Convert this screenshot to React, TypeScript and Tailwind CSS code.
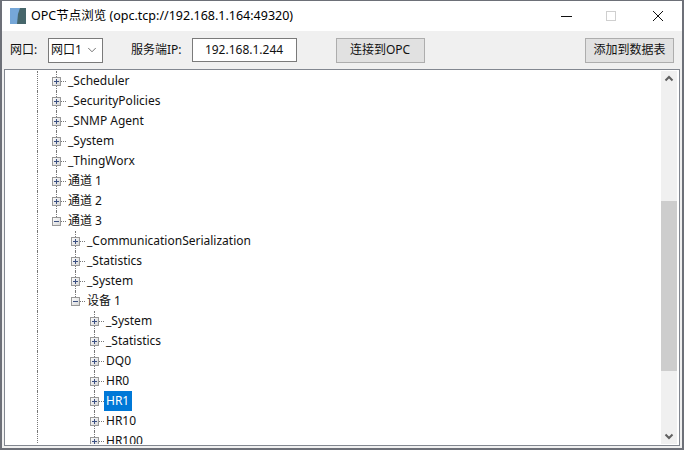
import { ChevronDown } from "lucide-react";

type Node = { label: string; level: 1 | 2 | 3; open?: boolean; selected?: boolean; end?: boolean };

const NODES: Node[] = [
  { label: "_Scheduler", level: 1 },
  { label: "_SecurityPolicies", level: 1 },
  { label: "_SNMP Agent", level: 1 },
  { label: "_System", level: 1 },
  { label: "_ThingWorx", level: 1 },
  { label: "通道 1", level: 1 },
  { label: "通道 2", level: 1 },
  { label: "通道 3", level: 1, open: true, end: true },
  { label: "_CommunicationSerialization", level: 2 },
  { label: "_Statistics", level: 2 },
  { label: "_System", level: 2 },
  { label: "设备 1", level: 2, open: true, end: true },
  { label: "_System", level: 3 },
  { label: "_Statistics", level: 3 },
  { label: "DQ0", level: 3 },
  { label: "HR0", level: 3 },
  { label: "HR1", level: 3, selected: true },
  { label: "HR10", level: 3 },
  { label: "HR100", level: 3 },
];

function Expander({ open }: { open?: boolean }) {
  return (
    <svg width="9" height="9" viewBox="0 0 9 9" className="absolute left-[-4px] top-[6px]">
      <defs>
        <linearGradient id="exp" x1="0" y1="0" x2="1" y2="1">
          <stop offset="0" stopColor="#ffffff" />
          <stop offset="1" stopColor="#d4d4d4" />
        </linearGradient>
      </defs>
      <rect x="0.5" y="0.5" width="8" height="8" fill="url(#exp)" stroke="#999999" />
      <path d="M2 4.5h5" stroke="#3b4f81" />
      {!open && <path d="M4.5 2v5" stroke="#3b4f81" />}
    </svg>
  );
}

function TreeRow({ node }: { node: Node }) {
  return (
    <div className="flex h-5 shrink-0">
      <div className="h-full w-[19px] shrink-0 border-l border-dotted border-[#777]" />
      {node.level > 1 && <div className="h-full w-[19px] shrink-0" />}
      {node.level > 2 && <div className="h-full w-[19px] shrink-0" />}
      <div className="relative h-full w-[10px] shrink-0">
        <div className={`absolute left-0 top-0 border-l border-dotted border-[#777] ${node.end ? "h-[10px]" : "h-5"}`} />
        <div className="absolute left-0 top-[10px] w-[10px] border-t border-dotted border-[#777]" />
        <Expander open={node.open} />
      </div>
      <span
        className={`flex h-5 items-center pl-[2px] pr-[3px] leading-5 ${node.selected ? "bg-[#0078d7] text-white" : "text-[#111]"}`}
      >
        {node.label}
      </span>
    </div>
  );
}

export default function App() {
  return (
    <div className="flex h-[450px] w-[684px] flex-col overflow-hidden border-x-2 border-b-2 border-t border-[#6d7078] bg-[#f0f0f0] font-['Noto_Sans','Noto_Sans_CJK_SC',sans-serif] text-[12px] text-[#111]">
      <div className="flex h-[30px] shrink-0 items-center bg-white pl-2">
        <svg width="16" height="16" viewBox="0 0 16 16" className="shrink-0">
          <rect width="16" height="16" fill="#76a7d8" />
          <path d="M7 16L8 6l2-6h6v16z" fill="#46666b" />
        </svg>
        <span className="ml-[5px] text-[12.5px] text-black">OPC节点浏览 (opc.tcp://192.168.1.164:49320)</span>
        <div className="ml-auto flex items-center">
          <svg width="46" height="16" viewBox="0 0 46 16">
            <path d="M17 8.5h11" stroke="#111" />
          </svg>
          <svg width="46" height="16" viewBox="0 0 46 16">
            <rect x="16.5" y="3.5" width="9" height="9" fill="none" stroke="#cfcfcf" />
          </svg>
          <svg width="46" height="16" viewBox="0 0 46 16">
            <path d="M17 3l10 10M27 3L17 13" stroke="#111" />
          </svg>
        </div>
      </div>

      <div className="flex h-[38px] shrink-0 items-center pl-2 pr-2">
        <span className="w-[38px]">网口:</span>
        <div className="flex h-[25px] w-[55px] items-center justify-between border border-[#7a7a7a] bg-white pl-[2px] pr-[3px]">
          <span>网口1</span>
          <ChevronDown size={14} strokeWidth={1} />
        </div>
        <span className="ml-[28px]">服务端IP:</span>
        <div className="ml-[10px] flex h-[24px] w-[105px] items-center justify-center border border-[#7a7a7a] bg-white">
          192.168.1.244
        </div>
        <button className="ml-[39px] h-[25px] w-[89px] border border-[#adadad] bg-[#e1e1e1]">连接到OPC</button>
        <button className="ml-auto h-[25px] w-[89px] border border-[#adadad] bg-[#e1e1e1]">添加到数据表</button>
      </div>

      <div className="mx-[2px] flex min-h-0 flex-1 border border-[#828790] bg-white py-[1px] pl-[1px] pr-[2px]">
        <div className="flex min-w-0 flex-1 flex-col overflow-hidden pl-[31px]">
          {NODES.map((node, i) => (
            <TreeRow key={i} node={node} />
          ))}
        </div>
        <div className="flex w-[16px] shrink-0 flex-col items-center bg-[#f0f0f0]">
          <svg width="16" height="16" viewBox="0 0 16 16" className="shrink-0">
            <path d="M4.5 9.5L8 6l3.5 3.5" fill="none" stroke="#606060" strokeWidth="2" />
          </svg>
          <div className="mt-[114px] h-[170px] w-full bg-[#cdcdcd]" />
          <svg width="16" height="16" viewBox="0 0 16 16" className="mt-auto shrink-0">
            <path d="M4.5 6.5L8 10l3.5-3.5" fill="none" stroke="#606060" strokeWidth="2" />
          </svg>
        </div>
      </div>
      <div className="h-[2px] shrink-0" />
    </div>
  );
}
